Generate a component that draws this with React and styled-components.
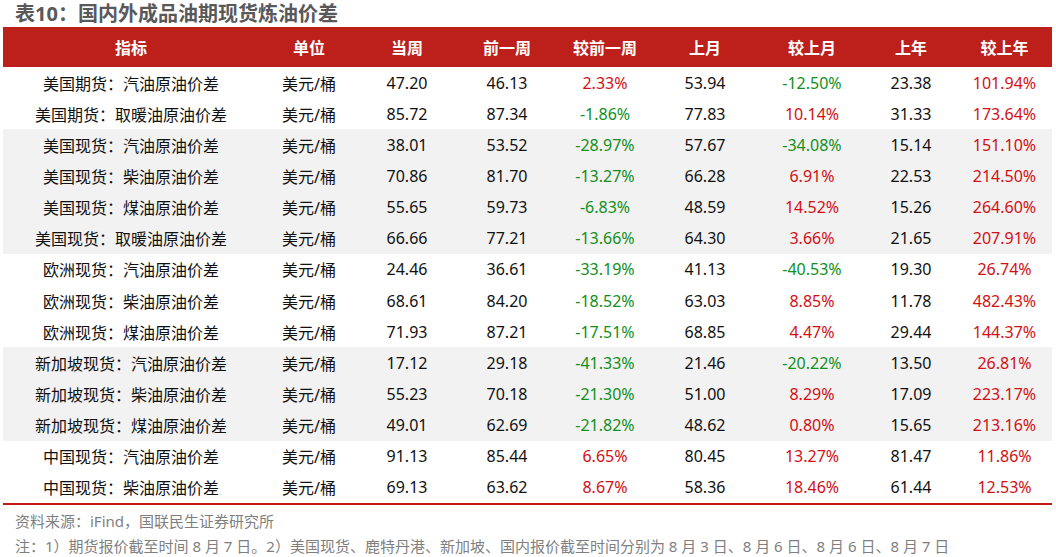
import React from 'react'
import styled, { createGlobalStyle } from 'styled-components'

const GlobalStyle = createGlobalStyle`
  html, body {
    margin: 0;
    padding: 0;
    background: #ffffff;
  }
  body {
    font-family: "Noto Sans", "Noto Sans CJK SC", sans-serif;
  }
`

const COLUMNS = '256px 100px 96px 104px 92px 108px 106px 92px 1fr'

const Page = styled.div`
  width: 1056px;
  padding: 0 4px 0 3px;
  box-sizing: border-box;
`

const Title = styled.h1`
  margin: 0;
  padding: 1px 0 0 12px;
  height: 27px;
  box-sizing: border-box;
  font-size: 20px;
  line-height: 26px;
  font-weight: 700;
  color: #595959;
`

const Table = styled.div`
  display: flex;
  flex-direction: column;
  border-bottom: 2px solid #c41a16;
`

const Row = styled.div`
  display: grid;
  grid-template-columns: ${COLUMNS};
  height: ${({ $head }) => ($head ? '40px' : '31.15px')};
  background: ${({ $head, $shaded }) =>
    $head ? '#bd201b' : $shaded ? '#f2f2f2' : '#ffffff'};
`

const Cell = styled.div`
  display: flex;
  align-items: center;
  justify-content: center;
  white-space: nowrap;
  font-size: 16px;
  font-weight: ${({ $head }) => ($head ? 700 : 400)};
  color: ${({ $head, $tone }) =>
    $head
      ? '#ffffff'
      : $tone === 'up'
      ? '#d40f14'
      : $tone === 'down'
      ? '#11901a'
      : '#111111'};
`

const Notes = styled.div`
  padding: 4px 0 0 12px;
  font-size: 15px;
  line-height: 25px;
  color: #7f7f7f;
`

const headers = ['指标', '单位', '当周', '前一周', '较前一周', '上月', '较上月', '上年', '较上年']

// name, cur, prevWeek, chgWeek, lastMonth, chgMonth, lastYear, chgYear, group shaded
const rows = [
  ['美国期货：汽油原油价差', '47.20', '46.13', '2.33%', '53.94', '-12.50%', '23.38', '101.94%', false],
  ['美国期货：取暖油原油价差', '85.72', '87.34', '-1.86%', '77.83', '10.14%', '31.33', '173.64%', false],
  ['美国现货：汽油原油价差', '38.01', '53.52', '-28.97%', '57.67', '-34.08%', '15.14', '151.10%', true],
  ['美国现货：柴油原油价差', '70.86', '81.70', '-13.27%', '66.28', '6.91%', '22.53', '214.50%', true],
  ['美国现货：煤油原油价差', '55.65', '59.73', '-6.83%', '48.59', '14.52%', '15.26', '264.60%', true],
  ['美国现货：取暖油原油价差', '66.66', '77.21', '-13.66%', '64.30', '3.66%', '21.65', '207.91%', true],
  ['欧洲现货：汽油原油价差', '24.46', '36.61', '-33.19%', '41.13', '-40.53%', '19.30', '26.74%', false],
  ['欧洲现货：柴油原油价差', '68.61', '84.20', '-18.52%', '63.03', '8.85%', '11.78', '482.43%', false],
  ['欧洲现货：煤油原油价差', '71.93', '87.21', '-17.51%', '68.85', '4.47%', '29.44', '144.37%', false],
  ['新加坡现货：汽油原油价差', '17.12', '29.18', '-41.33%', '21.46', '-20.22%', '13.50', '26.81%', true],
  ['新加坡现货：柴油原油价差', '55.23', '70.18', '-21.30%', '51.00', '8.29%', '17.09', '223.17%', true],
  ['新加坡现货：煤油原油价差', '49.01', '62.69', '-21.82%', '48.62', '0.80%', '15.65', '213.16%', true],
  ['中国现货：汽油原油价差', '91.13', '85.44', '6.65%', '80.45', '13.27%', '81.47', '11.86%', false],
  ['中国现货：柴油原油价差', '69.13', '63.62', '8.67%', '58.36', '18.46%', '61.44', '12.53%', false],
]

const tone = (v) => (v.startsWith('-') ? 'down' : 'up')

export default function App() {
  return (
    <>
      <GlobalStyle />
      <Page>
        <Title>表10：国内外成品油期现货炼油价差</Title>
        <Table>
          <Row $head>
            {headers.map((h) => (
              <Cell key={h} $head>
                {h}
              </Cell>
            ))}
          </Row>
          {rows.map(([name, cur, pw, cw, lm, cm, ly, cy, shaded]) => (
            <Row key={name} $shaded={shaded}>
              <Cell>{name}</Cell>
              <Cell>美元/桶</Cell>
              <Cell>{cur}</Cell>
              <Cell>{pw}</Cell>
              <Cell $tone={tone(cw)}>{cw}</Cell>
              <Cell>{lm}</Cell>
              <Cell $tone={tone(cm)}>{cm}</Cell>
              <Cell>{ly}</Cell>
              <Cell $tone={tone(cy)}>{cy}</Cell>
            </Row>
          ))}
        </Table>
        <Notes>
          <div>资料来源：iFind，国联民生证券研究所</div>
          <div>
            注：1）期货报价截至时间 8 月 7 日。2）美国现货、鹿特丹港、新加坡、国内报价截至时间分别为 8 月 3 日、8 月 6 日、8 月 6 日、8 月 7 日
          </div>
        </Notes>
      </Page>
    </>
  )
}
